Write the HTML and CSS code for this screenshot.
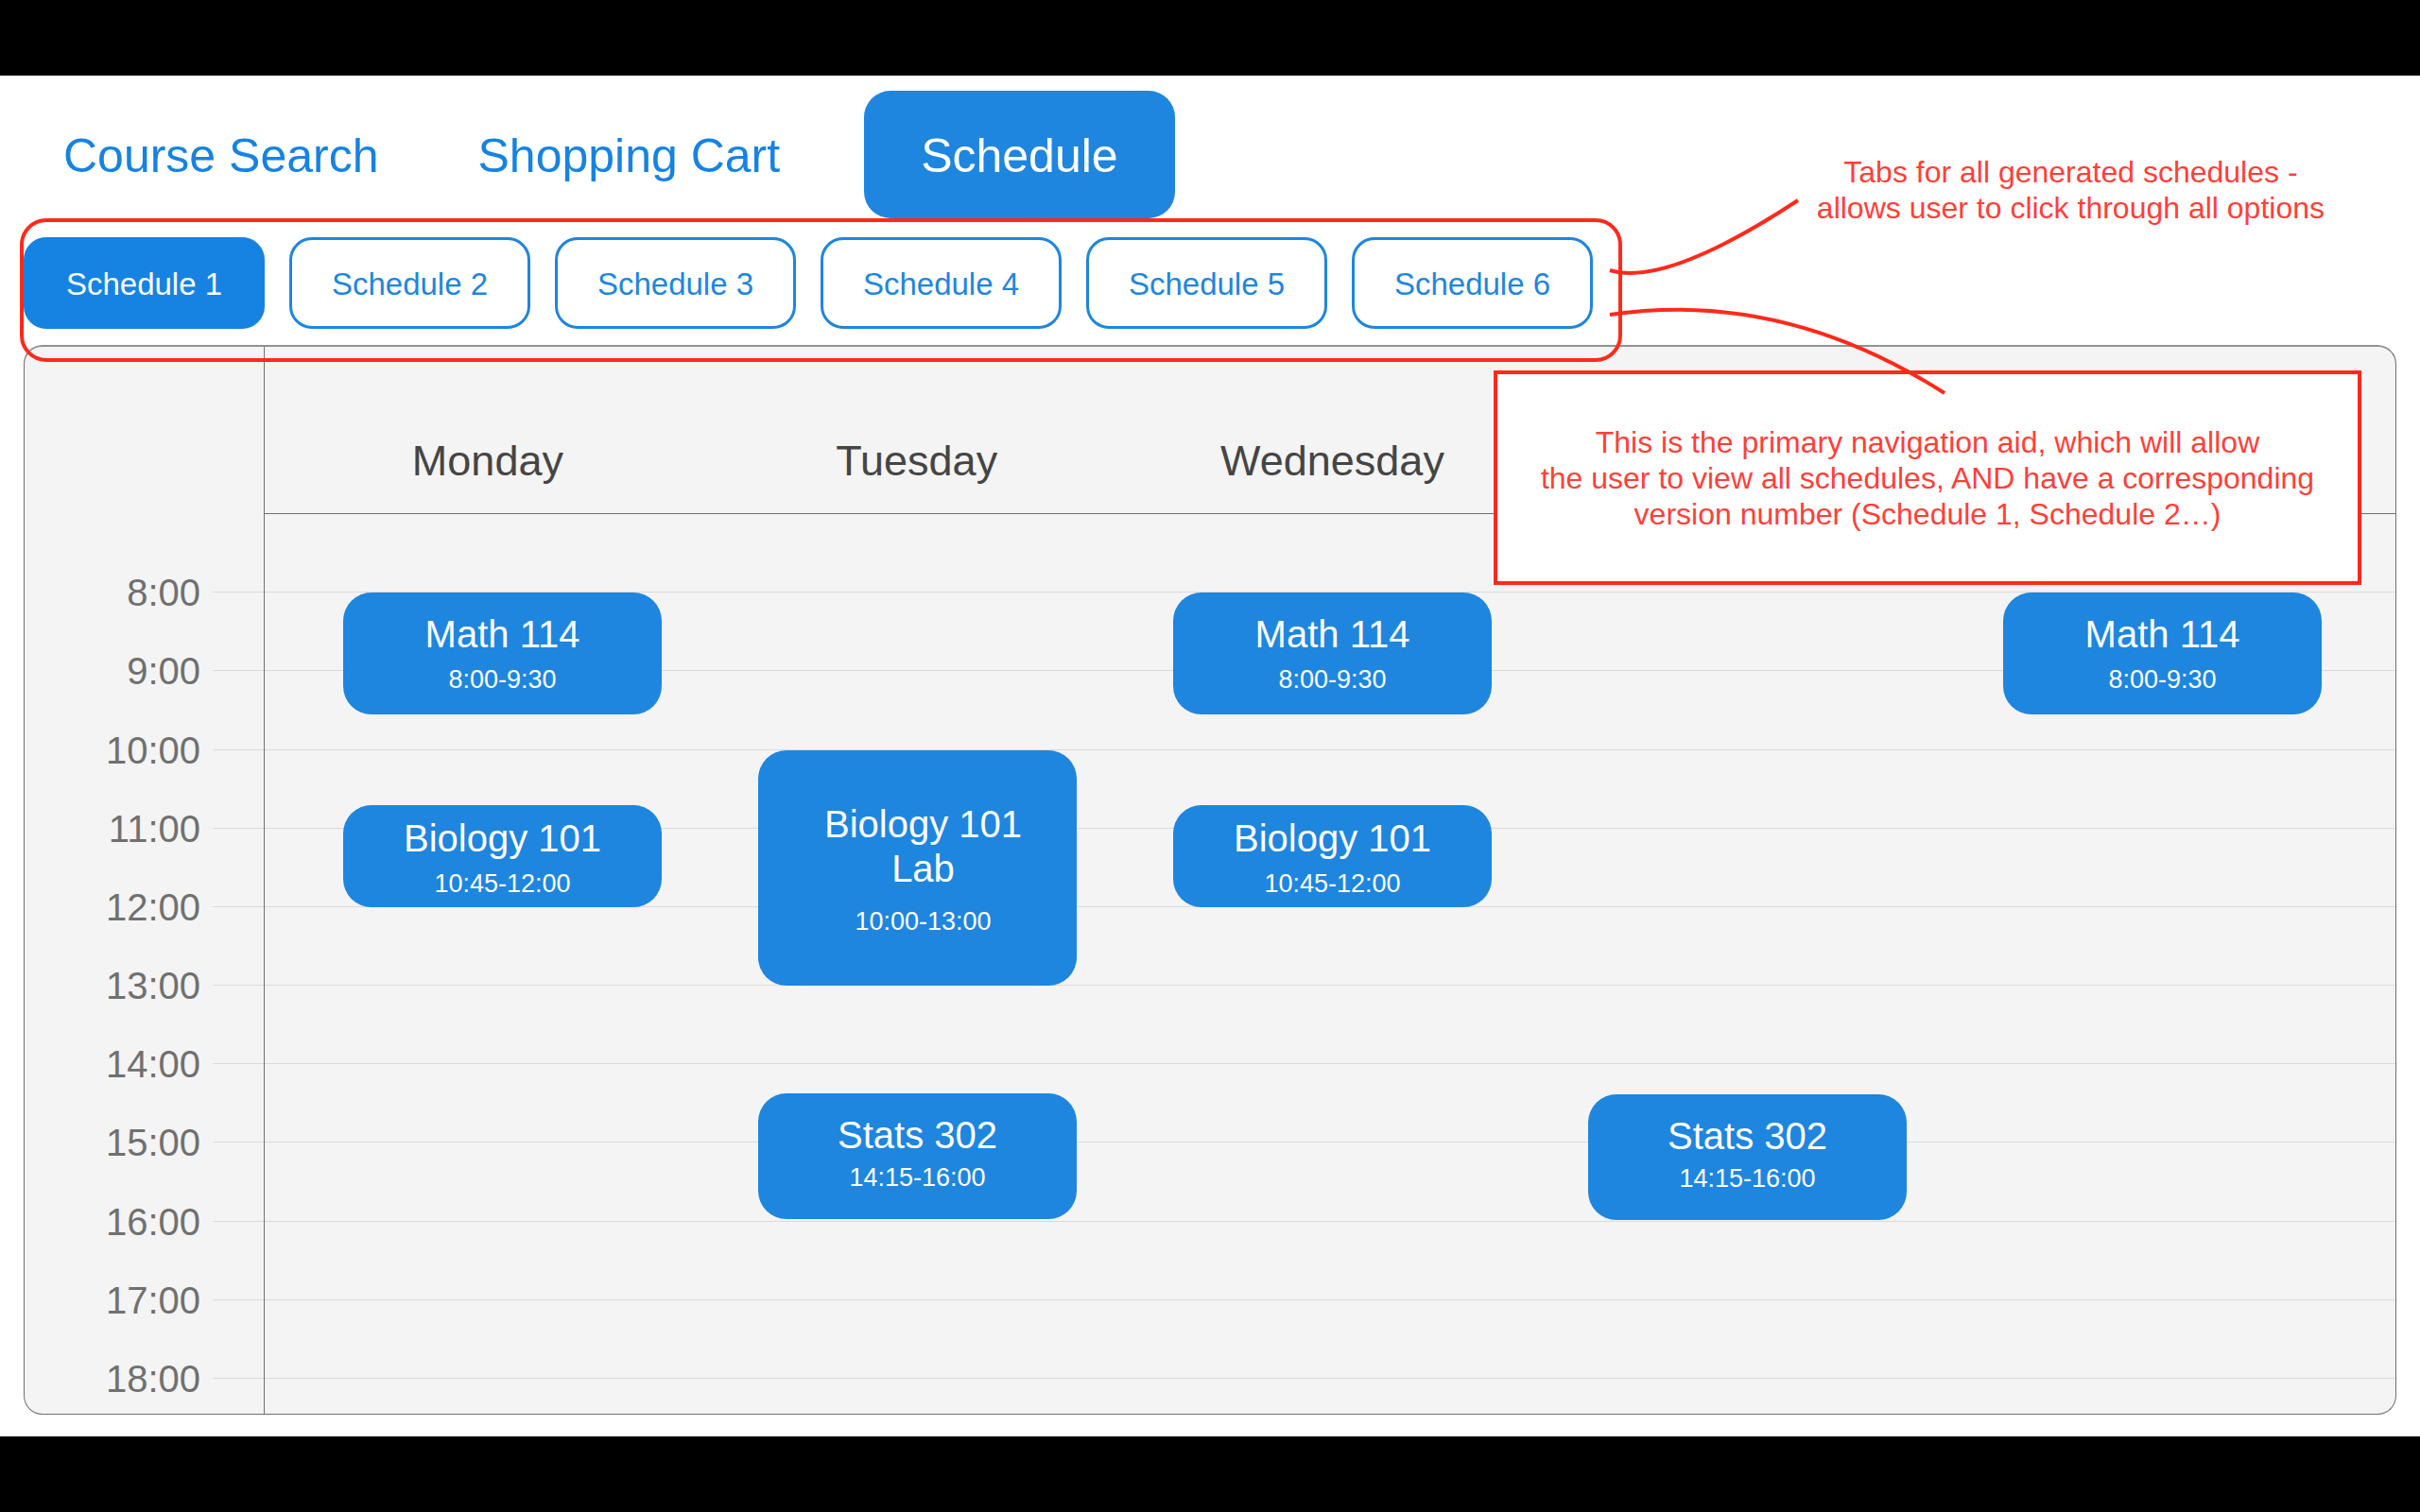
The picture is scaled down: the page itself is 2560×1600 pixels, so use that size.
FILE: index.html
```html
<!DOCTYPE html>
<html lang="en">
<head>
  <meta charset="utf-8">
  <meta name="viewport" content="width=device-width, initial-scale=1">
  <title>Schedule</title>
  <link rel="stylesheet" href="styles.css">
</head>
<body>
  <main class="app">
    <header class="topbar">
      <nav class="main-nav">
        <a class="main-link" href="#search">Course Search</a>
        <a class="main-link" href="#cart">Shopping Cart</a>
        <a class="main-link main-link-active" href="#schedule">Schedule</a>
      </nav>
      <p class="note note-tabs">Tabs for all generated schedules -<br>allows user to click through all options</p>
    </header>

    <div class="tabs">
      <button class="tab tab-active" type="button">Schedule 1</button>
      <button class="tab" type="button">Schedule 2</button>
      <button class="tab" type="button">Schedule 3</button>
      <button class="tab" type="button">Schedule 4</button>
      <button class="tab" type="button">Schedule 5</button>
      <button class="tab" type="button">Schedule 6</button>
      <div class="tabs-frame"></div>
    </div>

    <section class="calendar">
      <div class="day-names">
        <h2 class="day-name">Monday</h2>
        <h2 class="day-name">Tuesday</h2>
        <h2 class="day-name">Wednesday</h2>
      </div>

      <ol class="hours">
        <li class="hour"><span class="hour-label">8:00</span></li>
        <li class="hour"><span class="hour-label">9:00</span></li>
        <li class="hour"><span class="hour-label">10:00</span></li>
        <li class="hour"><span class="hour-label">11:00</span></li>
        <li class="hour"><span class="hour-label">12:00</span></li>
        <li class="hour"><span class="hour-label">13:00</span></li>
        <li class="hour"><span class="hour-label">14:00</span></li>
        <li class="hour"><span class="hour-label">15:00</span></li>
        <li class="hour"><span class="hour-label">16:00</span></li>
        <li class="hour"><span class="hour-label">17:00</span></li>
        <li class="hour"><span class="hour-label">18:00</span></li>
      </ol>

      <!-- --start and --length are minutes; the grid starts at 7:00 -->
      <div class="days">
        <div class="day">
          <article class="event" style="--start: 60; --length: 93">
            <h3 class="event-title">Math 114</h3>
            <p class="event-time">8:00-9:30</p>
          </article>
          <article class="event event-short" style="--start: 222; --length: 78">
            <h3 class="event-title">Biology 101</h3>
            <p class="event-time">10:45-12:00</p>
          </article>
        </div>
        <div class="day">
          <article class="event event-lab" style="--start: 180; --length: 180">
            <h3 class="event-title">Biology 101<br>Lab</h3>
            <p class="event-time">10:00-13:00</p>
          </article>
          <article class="event event-tight" style="--start: 442; --length: 96">
            <h3 class="event-title">Stats 302</h3>
            <p class="event-time">14:15-16:00</p>
          </article>
        </div>
        <div class="day">
          <article class="event" style="--start: 60; --length: 93">
            <h3 class="event-title">Math 114</h3>
            <p class="event-time">8:00-9:30</p>
          </article>
          <article class="event event-short" style="--start: 222; --length: 78">
            <h3 class="event-title">Biology 101</h3>
            <p class="event-time">10:45-12:00</p>
          </article>
        </div>
        <div class="day">
          <article class="event event-tight" style="--start: 443; --length: 96">
            <h3 class="event-title">Stats 302</h3>
            <p class="event-time">14:15-16:00</p>
          </article>
        </div>
        <div class="day">
          <article class="event" style="--start: 60; --length: 93">
            <h3 class="event-title">Math 114</h3>
            <p class="event-time">8:00-9:30</p>
          </article>
        </div>
      </div>

      <aside class="note note-box">
        <p class="note-text">This is the primary navigation aid, which will allow<br>the user to view all schedules, AND have a corresponding<br>version number (Schedule 1, Schedule 2…)</p>
      </aside>
    </section>

    <svg class="connectors" width="360" height="220" viewBox="1700 200 360 220" fill="none" aria-hidden="true">
      <path d="M1703 286Q1762 304 1902 212"/>
      <path d="M1703 333Q1885 306 2057 416"/>
    </svg>
  </main>
</body>
</html>
```

FILE: styles.css
```css
:root {
  --blue: #1e86de;
  --blue-strong: #1683e2;
  --red: #ff2a1b;
  --red-text: #ff3f38;
  --line: #707070;
}

* {
  box-sizing: border-box;
  margin: 0;
  padding: 0;
}

body {
  display: flex;
  flex-direction: column;
  min-height: 100vh;
  padding: 80px 0;
  background: #000;
  font-family: "Liberation Sans", Arial, sans-serif;
}

.app {
  position: relative;
  flex: 1;
  display: flex;
  flex-direction: column;
  padding: 16px 25px 23px;
  background: #fff;
}

/* Main navigation */

.topbar {
  display: flex;
  justify-content: space-between;
  align-items: flex-end;
  padding-right: 76px;
}

.main-nav {
  display: flex;
  gap: 73px;
  padding-left: 26px;
}

.main-link {
  padding: 3px 16px 0;
  color: var(--blue-strong);
  font-size: 50px;
  line-height: 132px;
  text-decoration: none;
  white-space: nowrap;
}

.main-link-active {
  padding: 3px 60px 0;
  border-radius: 28px;
  background: var(--blue);
  color: #fff;
}

/* Schedule tabs */

.tabs {
  position: relative;
  align-self: flex-start;
  display: flex;
  gap: 26px;
  margin: 20px 0 17px;
}

.tab {
  width: 255px;
  height: 97px;
  padding-top: 2px;
  border: 3px solid var(--blue);
  border-radius: 24px;
  background: #fff;
  color: var(--blue);
  font-family: inherit;
  font-size: 33px;
}

.tab-active {
  border-color: var(--blue-strong);
  background: var(--blue-strong);
  color: #fff;
}

.tabs-frame {
  position: absolute;
  z-index: 3;
  inset: -20px -31px -35px -4px;
  border: 4px solid var(--red);
  border-radius: 28px;
  pointer-events: none;
}

/* Calendar */

.calendar {
  position: relative;
  flex: 1;
  display: grid;
  grid-template-columns: 254px 1fr;
  grid-template-rows: 177px 1fr;
  border: 1px solid var(--line);
  border-top: 2px solid #929292;
  border-radius: 20px;
  background: #f4f4f4;
}

.calendar::before {
  content: "";
  grid-area: 1 / 1 / -1 / 2;
  z-index: 1;
  border-right: 1px solid var(--line);
}

.day-names {
  grid-area: 1 / 2;
  display: grid;
  grid-template-columns: 472fr 436fr 444fr 903fr;
  align-items: end;
  padding-bottom: 29px;
  border-bottom: 1px solid var(--line);
}

.day-name {
  color: #454545;
  font-size: 45px;
  font-weight: 400;
  line-height: 52px;
  text-align: center;
}

.hours {
  grid-area: 2 / 1 / 3 / -1;
  display: grid;
  grid-auto-rows: 1fr;
  margin-bottom: 37px;
  list-style: none;
}

.hour {
  display: flex;
  align-items: flex-end;
  gap: 13px;
}

.hour::after {
  content: "";
  flex: 1;
  border-bottom: 1px solid #dadada;
}

.hour-label {
  width: 186px;
  margin-bottom: -23px;
  color: #707070;
  font-size: 40px;
  line-height: 46px;
  text-align: right;
}

.days {
  grid-area: 2 / 2;
  display: grid;
  grid-template-columns: repeat(5, 1fr);
  margin: 0 27px 37px 32px;
}

.day {
  position: relative;
}

.event {
  position: absolute;
  top: calc(var(--start) / 660 * 100%);
  right: 51px;
  left: 51px;
  display: flex;
  flex-direction: column;
  gap: 8px;
  height: calc(var(--length) / 660 * 100%);
  padding-top: 21px;
  border-radius: 30px;
  background: var(--blue);
  color: #fff;
  text-align: center;
}

.event-short {
  padding-top: 12px;
}

.event-tight {
  gap: 5px;
}

.event-lab {
  gap: 16px;
  padding-top: 55px;
  padding-left: 12px;
}

.event-title {
  font-size: 40px;
  font-weight: 400;
  line-height: 47px;
}

.event-time {
  font-size: 27px;
  line-height: 32px;
}

/* Annotations */

.note {
  color: var(--red-text);
  font-size: 32px;
  line-height: 38px;
  text-align: center;
}

.note-tabs {
  margin-bottom: -8px;
}

.note-box {
  position: absolute;
  z-index: 2;
  top: 25px;
  right: 36px;
  display: flex;
  align-items: center;
  justify-content: center;
  width: 918px;
  height: 227px;
  border: 4px solid var(--red);
  background: #fff;
}

.connectors {
  position: absolute;
  z-index: 4;
  top: 120px;
  left: 1700px;
  stroke: var(--red);
  stroke-width: 4;
  pointer-events: none;
}
```
